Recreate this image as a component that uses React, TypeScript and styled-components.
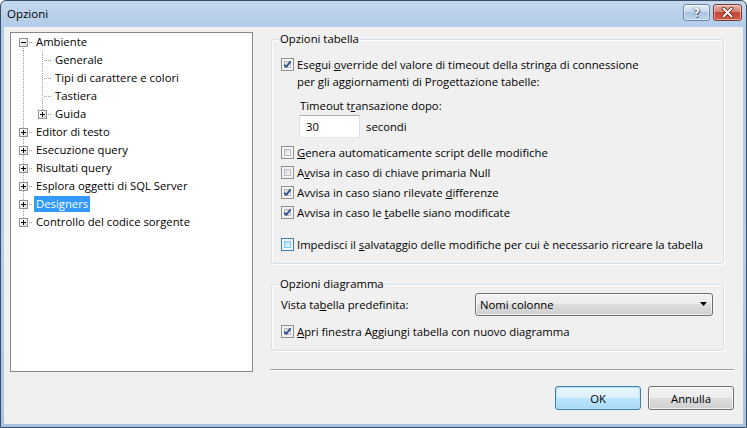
import React from 'react';
import styled, { createGlobalStyle } from 'styled-components';

const Global = createGlobalStyle`
  html, body { margin: 0; padding: 0; background: #ffffff; }
  body { font-family: "Open Sans", "Noto Sans", sans-serif; font-size: 11.3px; color: #000; }
  * { box-sizing: border-box; }
`;

const Window = styled.div`
  width: 747px;
  height: 428px;
  border: 1px solid #3b4d63;
  border-radius: 6px 6px 0 0;
  background: linear-gradient(to bottom, #c3d8ee 0px, #b2cbe7 26px, #b5cde8 60%, #a9c4e3 100%);
  display: flex;
  flex-direction: column;
  padding: 0 3px 3px 3px;
  overflow: hidden;
`;

const TitleBar = styled.div`
  height: 26px;
  display: flex;
  align-items: flex-start;
  flex: none;
`;

const Title = styled.div`
  flex: 1;
  padding: 5px 0 0 3px;
  font-size: 11.5px;
  line-height: 16px;
  color: #000;
`;

const CaptionButton = styled.div<{ $close?: boolean }>`
  margin-top: 3px;
  height: 17px;
  width: ${p => (p.$close ? '29px' : '27px')};
  margin-left: ${p => (p.$close ? '3px' : '0')};
  margin-right: ${p => (p.$close ? '1px' : '0')};
  border-radius: 3px;
  border: 1px solid ${p => (p.$close ? '#7a3a32' : '#6e86a6')};
  background: ${p =>
    p.$close
      ? 'linear-gradient(to bottom, #e9b1a5 0%, #d7806f 45%, #c4473a 50%, #d55a45 100%)'
      : 'linear-gradient(to bottom, #e6eef8 0%, #c8d8ec 45%, #aec5e2 50%, #bcd2ea 100%)'};
  display: flex;
  align-items: center;
  justify-content: center;
  box-shadow: inset 0 0 0 1px rgba(255, 255, 255, 0.45);
`;

const HelpGlyph = styled.span`
  font-family: "DejaVu Sans", sans-serif;
  font-weight: bold;
  font-size: 12px;
  line-height: 12px;
  color: #ffffff;
  text-shadow: 0 0 1px #2f4a6e, 0 0 1px #2f4a6e, 1px 1px 0 #4a6a92;
`;

const Client = styled.div`
  flex: 1;
  background: #f0f0f0;
  display: flex;
  flex-direction: column;
  padding: 5px 9px 0 6px;
`;

const MainRow = styled.div`
  display: flex;
  gap: 17px;
  height: 340px;
`;

const TreeBox = styled.div`
  width: 243px;
  height: 340px;
  background: #ffffff;
  border: 1px solid #828790;
  padding: 0 0 0 3px;
`;

const TreeRow = styled.div`
  display: flex;
  align-items: center;
  height: 18px;
`;

const Cell = styled.span<{ $up?: boolean; $down?: boolean; $stub?: boolean }>`
  position: relative;
  flex: none;
  width: 19px;
  height: 18px;
  &::before {
    content: '';
    position: absolute;
    left: 9px;
    width: 1px;
    top: ${p => (p.$up ? '0' : '9px')};
    bottom: ${p => (p.$down ? '0' : '9px')};
    background: repeating-linear-gradient(to bottom, #a0a0a0 0 1px, transparent 1px 2px);
    display: ${p => (p.$up || p.$down ? 'block' : 'none')};
  }
  &::after {
    content: '';
    position: absolute;
    left: 11px;
    top: 9px;
    width: 8px;
    height: 1px;
    background: repeating-linear-gradient(to right, #a0a0a0 0 1px, transparent 1px 2px);
    display: ${p => (p.$stub ? 'block' : 'none')};
  }
`;

const Expander = styled.span<{ $open?: boolean }>`
  position: absolute;
  left: 5px;
  top: 5px;
  width: 9px;
  height: 9px;
  border: 1px solid #919191;
  background: linear-gradient(135deg, #ffffff 0%, #f0f0f0 50%, #d8d8d8 100%);
  z-index: 1;
  &::before {
    content: '';
    position: absolute;
    left: 1px;
    top: 3px;
    width: 5px;
    height: 1px;
    background: #000;
  }
  &::after {
    content: '';
    position: absolute;
    left: 3px;
    top: 1px;
    width: 1px;
    height: 5px;
    background: #000;
    display: ${p => (p.$open ? 'none' : 'block')};
  }
`;

const TreeLabel = styled.span<{ $selected?: boolean }>`
  margin-left: 1px;
  padding: 0 2px;
  height: 16px;
  line-height: 16px;
  white-space: nowrap;
  background: ${p => (p.$selected ? '#3399ff' : 'transparent')};
  color: ${p => (p.$selected ? '#ffffff' : '#000000')};
`;

const RightCol = styled.div`
  width: 464px;
  display: flex;
  flex-direction: column;
`;

const Group = styled.div<{ $top: number }>`
  position: relative;
  margin-top: ${p => p.$top}px;
  margin-left: 1px;
  width: 453px;
  border: 1px solid #d5dfe5;
  border-radius: 3px;
  box-shadow: inset 1px 1px 0 #ffffff, 1px 1px 0 #ffffff;
  display: flex;
  flex-direction: column;
  padding: 0 9px 9px 9px;
`;

const Legend = styled.span`
  position: absolute;
  left: 7px;
  top: -9px;
  padding: 0 1px;
  line-height: 16px;
  background: #f0f0f0;
`;

const CheckRow = styled.label<{ $mt?: number; $multi?: boolean }>`
  display: flex;
  align-items: ${p => (p.$multi ? 'flex-start' : 'center')};
  gap: 3px;
  margin-top: ${p => p.$mt ?? 0}px;
  min-height: ${p => (p.$multi ? 'auto' : '20px')};
  line-height: 17px;
  white-space: nowrap;
`;

const BoxOuter = styled.span<{ $hot?: boolean; $multi?: boolean }>`
  flex: none;
  position: relative;
  width: 13px;
  height: 13px;
  margin-top: ${p => (p.$multi ? '2px' : '0')};
  border: 1px solid ${p => (p.$hot ? '#3c7fb1' : '#8e8f8f')};
  background: #f4f4f4;
  padding: 2px;
`;

const BoxInner = styled.span<{ $hot?: boolean }>`
  display: block;
  width: 100%;
  height: 100%;
  border: 1px solid ${p => (p.$hot ? '#79c6f9' : '#b8bcc1')};
  background: ${p =>
    p.$hot
      ? 'linear-gradient(135deg, #b1dffd 0%, #e9f7fe 100%)'
      : 'linear-gradient(135deg, #d6d9dd 0%, #f8f8f8 100%)'};
`;

const CheckSvg = styled.svg`
  position: absolute;
  left: 0;
  top: 0;
`;

const Mn = styled.span`
  text-decoration: underline;
`;

const FieldLabel = styled.div<{ $ml: number; $mt: number }>`
  margin-left: ${p => p.$ml}px;
  margin-top: ${p => p.$mt}px;
  line-height: 17px;
`;

const InputRow = styled.div`
  display: flex;
  align-items: center;
  margin-top: 1px;
  margin-left: 18px;
  gap: 6px;
`;

const TextInput = styled.div`
  width: 61px;
  height: 23px;
  background: #ffffff;
  border: 1px solid #abadb3;
  border-left-color: #e2e3ea;
  border-right-color: #dbdfe6;
  border-bottom-color: #e3e9ef;
  padding-left: 6px;
  line-height: 21px;
`;

const ComboRow = styled.div`
  display: flex;
  align-items: center;
  height: 22px;
  margin-top: 8px;
  padding-left: 0;
`;

const ComboLabel = styled.span`
  flex: 1;
  line-height: 17px;
`;

const Combo = styled.div`
  width: 238px;
  height: 23px;
  margin-right: 1px;
  border: 1px solid #707070;
  border-radius: 3px;
  background: linear-gradient(to bottom, #f2f2f2 0%, #ebebeb 50%, #dddddd 50%, #cfcfcf 100%);
  box-shadow: inset 0 0 0 1px rgba(255, 255, 255, 0.7);
  display: flex;
  align-items: center;
  justify-content: space-between;
  padding: 0 5px 0 4px;
`;

const Separator = styled.div`
  margin-top: 18px;
  height: 2px;
  border-top: 1px solid #a0a0a0;
  border-bottom: 1px solid #ffffff;
`;

const ButtonRow = styled.div`
  display: flex;
  justify-content: flex-end;
  gap: 7px;
  margin-top: 14px;
`;

const Button = styled.button<{ $default?: boolean }>`
  width: 86px;
  height: 24px;
  font-family: inherit;
  font-size: 11.3px;
  color: #000;
  border-radius: 3px;
  border: 1px solid ${p => (p.$default ? '#3c7fb1' : '#707070')};
  background: ${p =>
    p.$default
      ? 'linear-gradient(to bottom, #eaf6fd 0%, #d9f0fc 50%, #bee6fd 50%, #a7d9f5 100%)'
      : 'linear-gradient(to bottom, #f2f2f2 0%, #ebebeb 50%, #dddddd 50%, #cfcfcf 100%)'};
  box-shadow: inset 0 0 0 1px ${p => (p.$default ? 'rgba(180, 225, 250, 0.9)' : 'rgba(255, 255, 255, 0.7)')};
  padding: 0;
`;

type TreeNode = { label: string; open?: boolean; expandable?: boolean; selected?: boolean; children?: TreeNode[] };

const treeData: TreeNode[] = [
  {
    label: 'Ambiente',
    open: true,
    expandable: true,
    children: [
      { label: 'Generale' },
      { label: 'Tipi di carattere e colori' },
      { label: 'Tastiera' },
      { label: 'Guida', expandable: true },
    ],
  },
  { label: 'Editor di testo', expandable: true },
  { label: 'Esecuzione query', expandable: true },
  { label: 'Risultati query', expandable: true },
  { label: 'Esplora oggetti di SQL Server', expandable: true },
  { label: 'Designers', expandable: true, selected: true },
  { label: 'Controllo del codice sorgente', expandable: true },
];

type FlatRow = { node: TreeNode; pass: boolean[]; up: boolean; down: boolean };

function flatten(nodes: TreeNode[], pass: boolean[], root: boolean): FlatRow[] {
  const out: FlatRow[] = [];
  nodes.forEach((n, i) => {
    const last = i === nodes.length - 1;
    const up = root ? i > 0 : true;
    out.push({ node: n, pass, up, down: !last });
    if (n.open && n.children) out.push(...flatten(n.children, [...pass, !last], false));
  });
  return out;
}

const Check: React.FC<{ checked?: boolean; hot?: boolean; multi?: boolean }> = ({ checked, hot, multi }) => (
  <BoxOuter $hot={hot} $multi={multi}>
    <BoxInner $hot={hot} />
    {checked && (
      <CheckSvg width="11" height="11" viewBox="0 0 11 11">
        <path d="M2.2 5.6 L4.3 7.9 L8.6 2.4" fill="none" stroke="#34508f" strokeWidth="1.8" strokeLinejoin="round" />
      </CheckSvg>
    )}
  </BoxOuter>
);

export default function App() {
  const rows = flatten(treeData, [], true);
  return (
    <>
      <Global />
      <Window>
        <TitleBar>
          <Title>Opzioni</Title>
          <CaptionButton>
            <HelpGlyph>?</HelpGlyph>
          </CaptionButton>
          <CaptionButton $close>
            <svg width="13" height="11" viewBox="0 0 13 11">
              <path d="M2.5 1.5 L10.5 9.5 M10.5 1.5 L2.5 9.5" stroke="#5a2019" strokeWidth="3.6" strokeLinecap="round" />
              <path d="M2.5 1.5 L10.5 9.5 M10.5 1.5 L2.5 9.5" stroke="#ffffff" strokeWidth="2" strokeLinecap="round" />
            </svg>
          </CaptionButton>
        </TitleBar>
        <Client>
          <MainRow>
            <TreeBox>
              {rows.map((r, i) => (
                <TreeRow key={i}>
                  {r.pass.map((p, j) => (
                    <Cell key={j} $up={p} $down={p} />
                  ))}
                  <Cell $up={r.up} $down={r.down} $stub>
                    {r.node.expandable && <Expander $open={r.node.open} />}
                  </Cell>
                  <TreeLabel $selected={r.node.selected}>{r.node.label}</TreeLabel>
                </TreeRow>
              ))}
            </TreeBox>
            <RightCol>
              <Group $top={7}>
                <Legend>Opzioni tabella</Legend>
                <CheckRow $mt={16} $multi>
                  <Check checked multi />
                  <span>
                    Esegui <Mn>o</Mn>verride del valore di timeout della stringa di connessione
                    <br />
                    per gli aggiornamenti di Progettazione tabelle:
                  </span>
                </CheckRow>
                <FieldLabel $ml={19} $mt={7}>
                  Timeout t<Mn>r</Mn>ansazione dopo:
                </FieldLabel>
                <InputRow>
                  <TextInput>30</TextInput>
                  <span>secondi</span>
                </InputRow>
                <CheckRow $mt={4}>
                  <Check />
                  <span>
                    <Mn>G</Mn>enera automaticamente script delle modifiche
                  </span>
                </CheckRow>
                <CheckRow>
                  <Check />
                  <span>
                    A<Mn>v</Mn>visa in caso di chiave primaria Null
                  </span>
                </CheckRow>
                <CheckRow>
                  <Check checked />
                  <span>
                    Avvisa in caso siano rilevate <Mn>d</Mn>ifferenze
                  </span>
                </CheckRow>
                <CheckRow>
                  <Check checked />
                  <span>
                    Avvisa in caso le <Mn>t</Mn>abelle siano modificate
                  </span>
                </CheckRow>
                <CheckRow $mt={12}>
                  <Check hot />
                  <span>
                    Impedisci il <Mn>s</Mn>alvataggio delle modifiche per cui è necessario ricreare la tabella
                  </span>
                </CheckRow>
              </Group>
              <Group $top={20}>
                <Legend>Opzioni diagramma</Legend>
                <ComboRow>
                  <ComboLabel>
                    Vista ta<Mn>b</Mn>ella predefinita:
                  </ComboLabel>
                  <Combo>
                    <span>Nomi colonne</span>
                    <svg width="7" height="4" viewBox="0 0 7 4">
                      <path d="M0 0 H7 L3.5 4 Z" fill="#000" />
                    </svg>
                  </Combo>
                </ComboRow>
                <CheckRow $mt={6}>
                  <Check checked />
                  <span>
                    <Mn>A</Mn>pri finestra Aggiungi tabella con nuovo diagramma
                  </span>
                </CheckRow>
              </Group>
              <Separator />
            </RightCol>
          </MainRow>
          <ButtonRow>
            <Button $default>OK</Button>
            <Button>Annulla</Button>
          </ButtonRow>
        </Client>
      </Window>
    </>
  );
}
